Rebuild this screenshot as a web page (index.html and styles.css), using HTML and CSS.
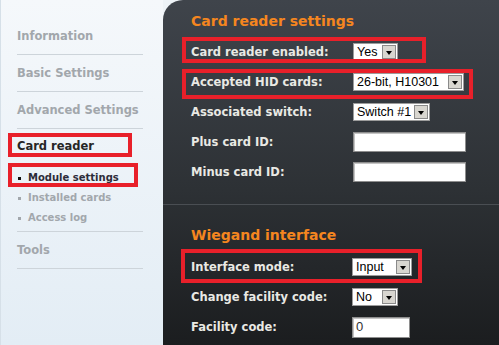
FILE: index.html
```html
<!DOCTYPE html>
<html lang="en">
<head>
  <meta charset="UTF-8">
  <meta name="viewport" content="width=device-width, initial-scale=1">
  <title>Card reader settings</title>
  <link rel="stylesheet" href="styles.css">
</head>
<body>

  <div class="page">
    <aside class="sidebar">
      <ul class="nav">
        <li class="nav-item">Information</li>
        <li class="nav-item">Basic Settings</li>
        <li class="nav-item">Advanced Settings</li>
        <li class="nav-group">
          <div class="nav-title">Card reader<span class="mark mark-title"></span></div>
          <ul class="subnav">
            <li class="active">Module settings<span class="mark mark-sub"></span></li>
            <li>Installed cards</li>
            <li>Access log</li>
          </ul>
        </li>
        <li class="nav-item">Tools</li>
      </ul>
    </aside>

    <main class="panel">
      <section class="section first">
        <h2>Card reader settings</h2>
        <div class="row">
          <label>Card reader enabled:</label>
          <div class="select w-yes"><span>Yes</span><i></i></div>
          <span class="mark mark-r1"></span>
        </div>
        <div class="row">
          <label>Accepted HID cards:</label>
          <div class="select w-hid"><span>26-bit, H10301</span><i></i></div>
          <span class="mark mark-r2"></span>
        </div>
        <div class="row">
          <label>Associated switch:</label>
          <div class="select w-switch"><span>Switch #1</span><i></i></div>
        </div>
        <div class="row">
          <label>Plus card ID:</label>
          <div class="input w-id"></div>
        </div>
        <div class="row">
          <label>Minus card ID:</label>
          <div class="input w-id"></div>
        </div>
      </section>

      <section class="section second">
        <h2>Wiegand interface</h2>
        <div class="row">
          <label>Interface mode:</label>
          <div class="select w-input shift"><span>Input</span><i></i></div>
          <span class="mark mark-r3"></span>
        </div>
        <div class="row">
          <label>Change facility code:</label>
          <div class="select w-no shift"><span>No</span><i></i></div>
        </div>
        <div class="row">
          <label>Facility code:</label>
          <div class="input w-fac shift">0</div>
        </div>
      </section>
    </main>
  </div>

</body>
</html>
```

FILE: styles.css
```css
html, body {
  margin: 0;
  padding: 0;
}
body {
  font-family: "DejaVu Sans", Verdana, sans-serif;
  background: #eef3f7;
  overflow: hidden;
}
.page {
  display: flex;
  height: 100vh;
}

/* sidebar */
.sidebar {
  width: 162px;
  flex: none;
  border-left: 1px solid #d6e0e8;
  background: linear-gradient(#f5f8fb, #e3edf5);
}
.nav {
  list-style: none;
  margin: 0;
  padding: 18px 20px 0 16px;
  white-space: nowrap;
}
.nav-item {
  height: 36px;
  line-height: 36px;
  border-bottom: 1px solid #cdd4da;
  font-size: 11.5px;
  font-weight: bold;
  color: #a2a7ac;
}
.nav-group {
  border-bottom: 1px solid #cdd4da;
  padding-bottom: 3px;
}
.nav-title {
  position: relative;
  height: 34px;
  line-height: 34px;
  font-size: 11.5px;
  font-weight: bold;
  color: #262626;
}
.subnav {
  list-style: none;
  margin: 0;
  padding: 5px 0 0 0;
}
.subnav li {
  position: relative;
  height: 20px;
  line-height: 20px;
  padding-left: 11px;
  font-size: 10px;
  font-weight: bold;
  color: #a2a7ac;
}
.subnav li::before {
  content: "";
  position: absolute;
  left: 1px;
  top: 9px;
  width: 3px;
  height: 3px;
  background: #a2a7ac;
}
.subnav li.active {
  color: #2c2c3a;
}
.subnav li.active::before {
  background: #111;
}

/* main panel */
.panel {
  flex: 1;
  border-top-left-radius: 20px;
  background: linear-gradient(#3f444b, #2d3135 55%, #1b1d1f);
}
.section {
  padding-left: 28px;
}
.section.first {
  padding-top: 11px;
  padding-bottom: 17px;
  border-bottom: 1px solid #4a4e53;
}
.section.second {
  padding-top: 20px;
}
.section h2 {
  margin: 0 0 6px 0;
  height: 20px;
  line-height: 20px;
  font-size: 14px;
  font-weight: bold;
  color: #f5861f;
}
.section.second h2 {
  margin-bottom: 7px;
}
.row {
  position: relative;
  display: flex;
  align-items: center;
  height: 30px;
}
.row label {
  width: 162px;
  flex: none;
  font-size: 11.5px;
  font-weight: bold;
  color: #e9e9e4;
}
.shift {
  margin-left: -1px;
}

/* form controls */
.select {
  display: flex;
  box-sizing: border-box;
  height: 18px;
  border: 1px solid #9c9c9c;
  background: #fff;
  font-family: "Liberation Sans", Arial, sans-serif;
  font-size: 12.5px;
  color: #000;
}
.select span {
  flex: 1;
  line-height: 16px;
  padding-left: 3px;
  white-space: nowrap;
}
.select i {
  position: relative;
  width: 14px;
  flex: none;
  margin: 1px;
  box-sizing: border-box;
  border: 1px solid #8a8a8a;
  background: #d8d6d0;
}
.select i::after {
  content: "";
  position: absolute;
  left: 3px;
  top: 5px;
  border-left: 3.5px solid transparent;
  border-right: 3.5px solid transparent;
  border-top: 4px solid #000;
}
.input {
  box-sizing: border-box;
  height: 20px;
  border: 1px solid #8e8e8e;
  box-shadow: inset 1px 1px 0 #c4c4c4;
  background: #fff;
  padding-left: 3px;
  font-family: "Liberation Sans", Arial, sans-serif;
  font-size: 13px;
  line-height: 18px;
  color: #333;
}
.w-yes { width: 45px; }
.w-hid { width: 111px; }
.w-switch { width: 77px; }
.w-input { width: 60px; }
.w-no { width: 46px; }
.w-id { width: 113px; }
.w-fac { width: 58px; height: 21px; }

/* red annotation frames */
.mark {
  position: absolute;
  box-sizing: border-box;
  border: 4px solid #e8202a;
  pointer-events: none;
}
.mark-title { left: -9px; top: 4px; width: 124px; height: 24px; }
.mark-sub { left: -9px; top: -5px; width: 130px; height: 24px; }
.mark-r1 { left: -9px; top: 0; width: 244px; height: 26px; }
.mark-r2 { left: -9px; top: 2px; width: 291px; height: 30px; }
.mark-r3 { left: -10px; top: -3px; width: 241px; height: 34px; }
```
